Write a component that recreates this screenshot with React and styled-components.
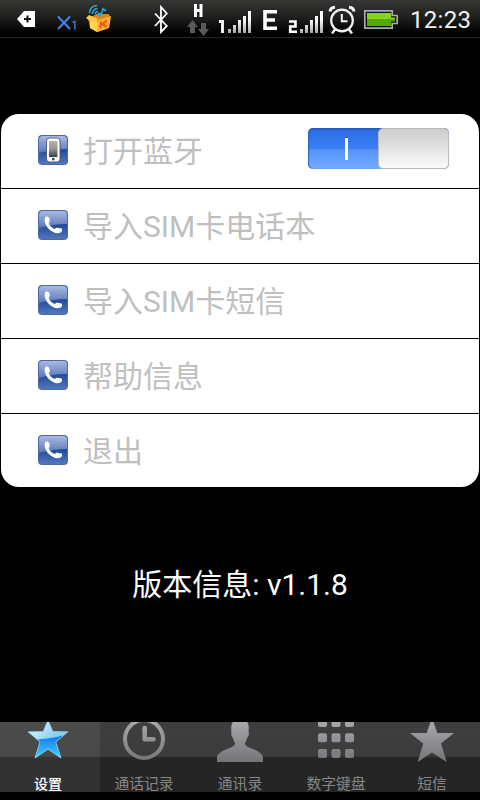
import React from 'react';
import styled, { createGlobalStyle } from 'styled-components';

const GlobalStyle = createGlobalStyle`
  * { box-sizing: border-box; }
  body { margin: 0; background: #000; overflow: hidden; }
`;

const Screen = styled.div`
  display: flex;
  flex-direction: column;
  width: 480px;
  height: 800px;
  background: #000;
  font-family: Roboto, "Noto Sans CJK SC", sans-serif;
`;

const StatusBar = styled.header`
  display: flex;
  height: 38px;
  flex: none;
  border-bottom: 1px solid #242424;
  background: linear-gradient(#373735, #1f1f1e 45%, #000 92%);
`;

const StatusIcon = styled.svg`
  display: block;
  flex: none;
  height: 38px;
  width: ${(p) => p.$w}px;
  margin-left: ${(p) => p.$gap || 0}px;
`;

const Time = styled.time`
  margin-left: 11px;
  color: #f2f2f2;
  font-size: 24px;
  letter-spacing: 0.3px;
  line-height: 41px;
  white-space: nowrap;
`;

const Panel = styled.main`
  flex: none;
  height: 373px;
  margin: 76px 1px 0;
  border-radius: 18px;
  background: #fff;
  overflow: hidden;
`;

const Row = styled.div`
  display: flex;
  align-items: center;
  height: 75px;
  padding: 0 30px 3px 37px;
  border-bottom: 1px solid #000;
`;

const RowIcon = styled.svg`
  display: block;
  flex: none;
  width: 30px;
  height: 30px;
`;

const RowLabel = styled.span`
  flex: 1;
  margin-left: 15px;
  color: #bfbfbf;
  font-size: 30px;
  line-height: 40px;
  white-space: nowrap;
  padding-top: 4px;
`;

const Switch = styled.div`
  display: flex;
  width: 141px;
  height: 41px;
  margin-top: -3px;
  border-radius: 5px;
  background: linear-gradient(#2358bd 0, #2f6fe6 8%, #3a80f5 51%, #5594f8 53%, #74abff 100%);
  box-shadow: inset 1px 0 1px #2b62bd;
`;

const SwitchOn = styled.div`
  display: flex;
  flex: 1;
  align-items: center;
  justify-content: center;
  padding-left: 7px;
`;

const SwitchMark = styled.div`
  width: 3px;
  height: 23px;
  border-top: 1px solid #244f9c;
  background: #fff;
`;

const Knob = styled.div`
  width: 71px;
  border: 1px solid #b9b9bd;
  border-radius: 5px;
  background: linear-gradient(#cdcdcd, #e2e2e2 50%, #fcfcfc);
`;

const Version = styled.p`
  margin: 76px 0 0;
  color: #fff;
  font-size: 30px;
  line-height: 44px;
  text-align: center;
`;

const TabBar = styled.nav`
  display: flex;
  height: 70px;
  margin-top: auto;
  margin-bottom: 8px;
  background: linear-gradient(#3e3e3e 0, #3c3c3c 34px, #303030 35px, #252525 36px, #252525 100%);
`;

const Tab = styled.div`
  display: flex;
  flex-direction: column;
  width: 96px;
  color: ${(p) => (p.$active ? '#fff' : '#868686')};
  background: ${(p) => (p.$active ? 'linear-gradient(#4b4b4b 0, #484848 34px, #3c3c3c 35px, #323232 36px, #323232 100%)' : 'none')};
  ${(p) => p.$active && 'width: 100px; padding-right: 4px; margin-right: -4px;'}
`;

const TabIcon = styled.svg`
  display: block;
  width: 96px;
  height: 42px;
`;

const TabLabel = styled.span`
  height: 28px;
  font-size: ${(p) => (p.$active ? 14 : 14.8)}px;
  font-weight: ${(p) => (p.$active ? 500 : 400)};
  line-height: 40px;
  text-align: center;
  white-space: nowrap;
`;

const Signal = () => (
  <g fill="url(#bars)">
    <rect x="228" y="29" width="3" height="4" />
    <rect x="233" y="25" width="3" height="8" />
    <rect x="238" y="20" width="3" height="13" />
    <rect x="243" y="16" width="3" height="17" />
    <rect x="248" y="11" width="3" height="22" />
  </g>
);

const Status = () => (
  <StatusBar>
    <StatusIcon $w={18} $gap={17} viewBox="17 0 18 38">
      <path d="M17 19 L24 11 H35 V27 H24Z" fill="#fff" />
      <path d="M27.5 15.5V22.5M24 19H31" stroke="#151515" strokeWidth="2" />
    </StatusIcon>
    <StatusIcon $w={20} $gap={22} viewBox="57 0 20 38">
      <path d="M58.5 17 L69.5 28.5 M69.5 17 L58.5 28.5" stroke="#4187e8" strokeWidth="2" strokeLinecap="round" />
      <path d="M72.5 22.5L74.8 21.4V29.5" fill="none" stroke="#3577c8" strokeWidth="1.5" />
    </StatusIcon>
    <StatusIcon $w={26} $gap={9} viewBox="86 0 26 38">
      <path d="M89.5 13Q90 6 97 5.5M92 14Q93 9 97.5 8.5M95 14Q95 12 98 11.5" fill="none" stroke="#2ba3d4" strokeWidth="1.5" />
      <path d="M88 18L98 14L110 17L109 28L97 32L90 28Z" fill="#e87808" />
      <path d="M96 14L109 14L110 17L98 20L93 17Z" fill="#d98618" />
      <path d="M98 20L111 16L109 28L97 32Z" fill="#ffb02b" />
      <path d="M90 20L98 22L97 32L90 28Z" fill="#ffd354" />
      <path d="M86 18L89 15L98 19L96 23L90 21Z" fill="#ffcb46" />
      <path d="M101 15L103 9L106 11" fill="none" stroke="#25a0cf" strokeWidth="1.8" />
      <circle cx="99.5" cy="14.5" r="2" fill="#31a6d8" />
      <path d="M101 21.5L100.5 28M107 20.5L102.5 24L106.5 27" fill="none" stroke="#f0541b" strokeWidth="2.2" />
    </StatusIcon>
    <StatusIcon $w={16} $gap={41} viewBox="153 0 16 38">
      <path d="M155 13.5L166.8 26L161 32V7L166.8 13.5L155 26" fill="none" stroke="#fff" strokeWidth="1.8" />
    </StatusIcon>
    <StatusIcon $w={24} $gap={17} viewBox="186 0 24 38">
      <path d="M195.5 4V17M201 4V17M195 10.5H202" stroke="#fff" strokeWidth="3" />
      <path d="M187 27L192.5 20L198 27H195V33H190V27Z" fill="#595959" />
      <path d="M198 29H201V23H206V29H209L203.5 36Z" fill="#595959" />
    </StatusIcon>
    <StatusIcon $w={34} $gap={8} viewBox="218 0 34 38">
      <defs>
        <linearGradient id="bars" x1="0" y1="11" x2="0" y2="33" gradientUnits="userSpaceOnUse">
          <stop stopColor="#fff" /><stop offset=".45" stopColor="#f5f5f5" /><stop offset="1" stopColor="#a9a9a9" />
        </linearGradient>
      </defs>
      <path d="M219 21.5H222.5V33" fill="none" stroke="#fff" strokeWidth="2.8" />
      <Signal />
    </StatusIcon>
    <StatusIcon $w={16} $gap={10} viewBox="262 0 16 38">
      <path d="M277 11.8H265V28.2H277M265 20H275" fill="none" stroke="#fff" strokeWidth="3.6" />
    </StatusIcon>
    <StatusIcon $w={36} $gap={10} viewBox="288 0 36 38">
      <path d="M289 21.5H295.5V26.5H290.2V31.7H297" fill="none" stroke="#fff" strokeWidth="2.6" />
      <g transform="translate(72 0)"><Signal /></g>
    </StatusIcon>
    <StatusIcon $w={28} $gap={4} viewBox="328 0 28 38">
      <g fill="none" stroke="#f2f2f2">
        <circle cx="342" cy="20.5" r="10.8" strokeWidth="2.2" />
        <path d="M341.8 14V21.2H347.5" strokeWidth="2" />
        <path d="M330 11.5Q330.5 7.5 335 7.2M349 7.2Q353.5 7.5 354 11.5" strokeWidth="3" />
        <path d="M335 29.5L332 33.5M349 29.5L352 33.5" strokeWidth="2.4" />
      </g>
    </StatusIcon>
    <StatusIcon $w={36} $gap={7} viewBox="363 0 36 38">
      <path d="M364.8 10.8H392.2V15.5H397.2V23.5H392.2V28.2H364.8Z" fill="#111" stroke="#aaa" strokeWidth="1.7" />
      <path d="M367 13H391V17.5H395V19H367Z" fill="#86d51b" />
      <path d="M367 19H395V21.5H391V26H367Z" fill="#55a800" />
    </StatusIcon>
    <Time>12:23</Time>
  </StatusBar>
);

const BlueTile = () => (
  <>
    <defs>
      <linearGradient id="gloss" x1="0" y1="0" x2="0" y2="1">
        <stop stopColor="#a9b9e0" /><stop offset="1" stopColor="#5975b9" />
      </linearGradient>
      <linearGradient id="deep" x1="0" y1="0" x2="0" y2="1">
        <stop offset=".45" stopColor="#1c4796" /><stop offset="1" stopColor="#5478bd" />
      </linearGradient>
    </defs>
    <rect x=".5" y=".5" width="29" height="29" rx="3" fill="url(#deep)" />
    <path d="M1 4Q1 1 4 1H26Q29 1 29 4V14Q15 14 1 18Z" fill="url(#gloss)" />
    <rect x=".5" y=".5" width="29" height="29" rx="3" fill="none" stroke="#4e69a2" />
  </>
);

const PhoneIcon = () => (
  <RowIcon viewBox="0 0 30 30">
    <BlueTile />
    <path d="M7 7.6C7.5 6.2 9.7 5.9 10.9 7.6C12.3 9.7 12 12 10.6 13C11.4 15.8 14.2 18.2 17 19.1C18 17.5 19.1 17.4 20.5 18.1C21.5 18.6 22.8 17.6 23.7 18.7C24.8 20.1 23.9 22.1 22.2 22.8C18.5 24.2 14.1 22.2 11.1 19.3C7.7 16 5.8 11.2 7 7.6Z" fill="#fff" />
  </RowIcon>
);

const MobileIcon = () => (
  <RowIcon viewBox="0 0 30 30">
    <defs>
      <linearGradient id="glass" x1="0" y1="0" x2="0" y2="1">
        <stop stopColor="#b4b5b1" /><stop offset=".5" stopColor="#959694" /><stop offset="1" stopColor="#393d42" />
      </linearGradient>
    </defs>
    <BlueTile />
    <rect x="8.5" y="3" width="13.5" height="24" rx="3" fill="#fff" stroke="#3a4867" strokeWidth=".8" />
    <rect x="11" y="6" width="8.5" height="16" fill="url(#glass)" />
    <rect x="14" y="23" width="2.5" height="2.3" fill="#204b96" />
  </RowIcon>
);

const GreyFill = ({ id }) => (
  <defs>
    <linearGradient id={id} x1="0" y1="0" x2="0" y2="42" gradientUnits="userSpaceOnUse">
      <stop stopColor="#a8a8ac" /><stop offset="1" stopColor="#727276" />
    </linearGradient>
  </defs>
);

const StarBlue = () => (
  <TabIcon viewBox="0 0 96 42">
    <defs>
      <linearGradient id="ice" x1="0" y1="0" x2="1" y2="1">
        <stop stopColor="#fff" /><stop offset=".5" stopColor="#8fd4f3" /><stop offset="1" stopColor="#5eb9ed" />
      </linearGradient>
      <linearGradient id="water" x1="0" y1="14" x2="0" y2="36" gradientUnits="userSpaceOnUse">
        <stop stopColor="#1478ed" /><stop offset="1" stopColor="#42d5ff" />
      </linearGradient>
      <clipPath id="star"><path d="M48-2L52.8 9.5L68 9.8L55.8 20L61 36L48 27.2L35 36L40 20L28 9.8L43.2 9.5Z" /></clipPath>
    </defs>
    <g clipPath="url(#star)">
      <path d="M25-3H70V38H25Z" fill="url(#ice)" />
      <path d="M25 20L41 17Q54 16 70 12V38H25Z" fill="url(#water)" />
    </g>
    <path d="M48-2L52.8 9.5L68 9.8L55.8 20L61 36L48 27.2L35 36L40 20L28 9.8L43.2 9.5Z" fill="none" stroke="#91d9ef" strokeWidth=".7" />
  </TabIcon>
);

const ClockGrey = () => (
  <TabIcon viewBox="0 0 96 42">
    <GreyFill id="clock-grey" />
    <g fill="none" stroke="url(#clock-grey)">
      <circle cx="48" cy="17" r="19" strokeWidth="4" />
      <path d="M48.7 6V17.2H57.5" strokeWidth="4.6" strokeLinecap="round" strokeLinejoin="round" />
    </g>
  </TabIcon>
);

const PersonGrey = () => (
  <TabIcon viewBox="0 0 96 42">
    <GreyFill id="person-grey" />
    <path d="M41 0H55C57 2 57 6 56.5 10C57.5 12 56.5 15 55 16C54.5 19 53 20 53 22C53 26 71 28 71 36V40H25V36C25 28 43 26 43 22C43 20 41.5 19 41 16C39.5 15 38.8 12 39.5 10C39 6 39 2 41 0Z" fill="url(#person-grey)" />
  </TabIcon>
);

const KeypadGrey = () => (
  <TabIcon viewBox="0 0 96 42">
    <GreyFill id="keys-grey" />
    <g fill="url(#keys-grey)">
      {[30, 43.5, 57].map((x) => [-4, 11.3, 27].map((y) => (
        <rect key={`${x}-${y}`} x={x} y={y} width="9" height="9" rx="2" />
      )))}
    </g>
  </TabIcon>
);

const StarGrey = () => (
  <TabIcon viewBox="0 0 96 42">
    <GreyFill id="star-grey" />
    <path d="M48-4L53.4 11H70L57 21.5L62.7 40L48 30.5L33.7 40L39.2 21.5L26 11H42.6Z" fill="url(#star-grey)" />
  </TabIcon>
);

const rows = ['导入SIM卡电话本', '导入SIM卡短信', '帮助信息', '退出'];
const tabs = [
  ['设置', StarBlue],
  ['通话记录', ClockGrey],
  ['通讯录', PersonGrey],
  ['数字键盘', KeypadGrey],
  ['短信', StarGrey],
];

export default function App() {
  return (
    <Screen>
      <GlobalStyle />
      <Status />
      <Panel>
        <Row>
          <MobileIcon />
          <RowLabel>打开蓝牙</RowLabel>
          <Switch role="switch" aria-checked="true">
            <SwitchOn><SwitchMark /></SwitchOn>
            <Knob />
          </Switch>
        </Row>
        {rows.map((label) => (
          <Row key={label}>
            <PhoneIcon />
            <RowLabel>{label}</RowLabel>
          </Row>
        ))}
      </Panel>
      <Version>版本信息: v1.1.8</Version>
      <TabBar>
        {tabs.map(([label, Icon], i) => (
          <Tab key={label} $active={i === 0}>
            <Icon />
            <TabLabel $active={i === 0}>{label}</TabLabel>
          </Tab>
        ))}
      </TabBar>
    </Screen>
  );
}
